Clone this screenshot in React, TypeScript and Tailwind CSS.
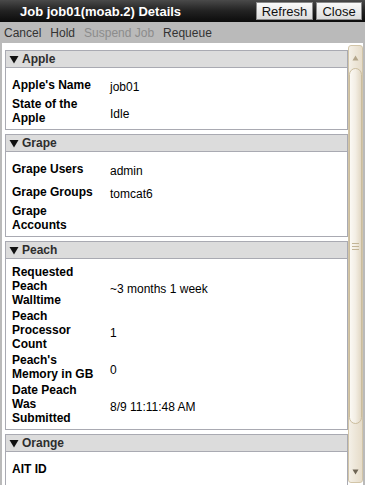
import React from "react";

type Row = { label: string; value?: string };

const Tri = () => (
  <svg width="10" height="9" viewBox="0 0 10 9" className="shrink-0">
    <polygon points="0.5,1 9.5,1 5,8.5" fill="#111" />
  </svg>
);

function Section({ title, rows, last }: { title: string; rows: Row[]; last?: boolean }) {
  return (
    <div className="border border-[#a9aab2] bg-white shrink-0">
      <div className="h-[17px] bg-[#dcdcdc] border-b border-[#a9aab2] flex items-center pl-[3px] gap-[3px] text-[12px] font-bold text-[#2e2e2e] leading-none">
        <Tri />
        <span>{title}</span>
      </div>
      <div className={"flex flex-col gap-[2px] pt-[6px] pl-[6px] " + (last ? "pb-[20px]" : "pb-[4px]")}>
        {rows.map((r) => (
          <div key={r.label} className="flex items-center min-h-[21px]">
            <div className="w-[84px] text-[12px] font-bold leading-[14px] text-black">{r.label}</div>
            {r.value !== undefined && (
              <div className="pl-[14px] pt-[5px] text-[12px] leading-[14px] text-black">{r.value}</div>
            )}
          </div>
        ))}
      </div>
    </div>
  );
}

function Scrollbar() {
  return (
    <div className="w-[15px] shrink-0 mt-[2px] mb-[2px] flex flex-col rounded-[3px] border border-[#d2c5a8] bg-gradient-to-r from-[#f4f0e7] to-[#e6dcc9]">
      <div className="h-[22px] shrink-0 flex justify-center pt-[9px]">
        <svg width="7" height="6" viewBox="0 0 7 6">
          <polygon points="3.5,0.5 6.5,5.5 0.5,5.5" fill="#b3a58a" />
        </svg>
      </div>
      <div className="h-[356px] shrink-0 rounded-[7px] border border-[#cbbd9e] bg-gradient-to-r from-[#fbf9f4] via-[#f3eee4] to-[#e2d8c4] flex flex-col items-center justify-center gap-[2px]">
        <div className="w-[7px] h-px bg-[#c3b596]" />
        <div className="w-[7px] h-px bg-[#c3b596]" />
        <div className="w-[7px] h-px bg-[#c3b596]" />
      </div>
      <div className="flex-1 flex justify-center items-end pb-[7px]">
        <svg width="7" height="6" viewBox="0 0 7 6">
          <polygon points="0.5,0.5 6.5,0.5 3.5,5.5" fill="#6e6555" />
        </svg>
      </div>
    </div>
  );
}

export default function App() {
  return (
    <div className="w-[365px] h-[485px] overflow-hidden flex flex-col font-['Liberation_Sans',Arial,sans-serif] bg-white">
      <div className="h-[22px] shrink-0 flex items-center bg-gradient-to-b from-[#4a4a4a] via-[#222] to-[#0c0c0c]">
        <div className="pl-[20px] flex-1 text-white font-bold text-[13px] leading-none">Job job01(moab.2) Details</div>
        <div className="flex gap-[3px] pr-[3px]">
          <button className="h-[18px] w-[57px] border border-[#8a8a8a] bg-gradient-to-b from-[#fafafa] to-[#dcdcdc] text-[13px] leading-none text-[#111]">Refresh</button>
          <button className="h-[18px] w-[46px] border border-[#8a8a8a] bg-gradient-to-b from-[#fafafa] to-[#dcdcdc] text-[13px] leading-none text-[#111]">Close</button>
        </div>
      </div>
      <div className="h-[21px] shrink-0 bg-[#bababa] flex items-center pl-[4px] gap-[9px] text-[12px] leading-none text-[#333]">
        <span>Cancel</span>
        <span>Hold</span>
        <span className="text-[#8c8c8c]">Suspend Job</span>
        <span>Requeue</span>
      </div>
      <div className="flex-1 flex border-l-2 border-r-2 border-[#bababa] min-h-0">
        <div className="flex-1 flex flex-col gap-[4px] pt-[7px] pl-[3px] overflow-hidden">
          <Section
            title="Apple"
            rows={[
              { label: "Apple's Name", value: "job01" },
              { label: "State of the Apple", value: "Idle" },
            ]}
          />
          <Section
            title="Grape"
            rows={[
              { label: "Grape Users", value: "admin" },
              { label: "Grape Groups", value: "tomcat6" },
              { label: "Grape Accounts" },
            ]}
          />
          <Section
            title="Peach"
            rows={[
              { label: "Requested Peach Walltime", value: "~3 months 1 week" },
              { label: "Peach Processor Count", value: "1" },
              { label: "Peach's Memory in GB", value: "0" },
              { label: "Date Peach Was Submitted", value: "8/9 11:11:48 AM" },
            ]}
          />
          <Section title="Orange" rows={[{ label: "AIT ID" }]} last />
        </div>
        <Scrollbar />
      </div>
    </div>
  );
}
